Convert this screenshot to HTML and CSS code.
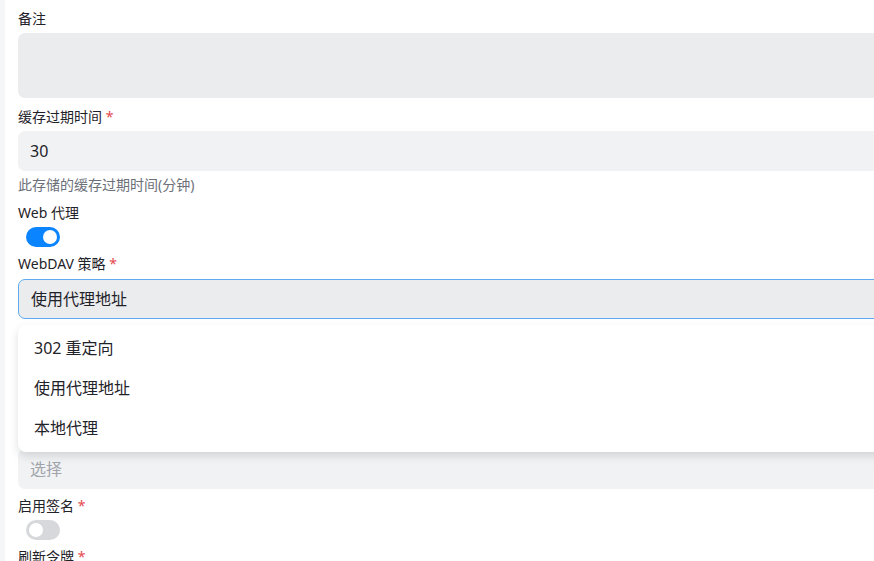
FILE: index.html
```html
<!DOCTYPE html>
<html lang="zh-CN">
<head>
<meta charset="utf-8">
<title>存储设置</title>
<link rel="stylesheet" href="styles.css">
</head>
<body>
<div class="page">
  <form class="card">
    <div class="field">
      <label class="label">备注</label>
      <div class="textarea"></div>
    </div>

    <div class="field">
      <label class="label">缓存过期时间 <span class="req">*</span></label>
      <div class="input">30</div>
      <div class="hint">此存储的缓存过期时间(分钟)</div>
    </div>

    <div class="field tight">
      <label class="label">Web 代理</label>
      <div class="switch on"><span class="knob"></span></div>
    </div>

    <div class="field">
      <label class="label label-select">WebDAV 策略 <span class="req">*</span></label>
      <div class="select-wrap">
        <div class="input select">使用代理地址</div>
        <ul class="menu">
          <li class="item">302 重定向</li>
          <li class="item">使用代理地址</li>
          <li class="item">本地代理</li>
        </ul>
      </div>
    </div>

    <div class="field">
      <label class="label">下载代理 URL</label>
      <div class="input"></div>
      <div class="hint hint-wide">留空则使用本地</div>
    </div>

    <div class="field tight">
      <label class="label">排序方式</label>
      <div class="input placeholder">选择</div>
    </div>

    <div class="field tight">
      <label class="label">启用签名 <span class="req">*</span></label>
      <div class="switch"><span class="knob"></span></div>
    </div>

    <div class="field">
      <label class="label">刷新令牌 <span class="req">*</span></label>
      <div class="input"></div>
    </div>
  </form>
</div>
</body>
</html>
```

FILE: styles.css
```css
html, body {
  margin: 0;
  padding: 0;
  overflow: hidden;
  background: #f5f6f7;
}

body {
  font-family: "Noto Sans", "Noto Sans CJK SC", sans-serif;
  color: #1f2329;
  font-size: 14px;
}

.page {
  padding-left: 5px;
}

.card {
  background: #ffffff;
  width: 1000px;
  padding: 9px 0 0 13px;
  display: flex;
  flex-direction: column;
  gap: 9px;
}

.field {
  display: flex;
  flex-direction: column;
  align-items: flex-start;
}

.field.tight {
  margin-bottom: -2px;
}

.label {
  font-size: 14px;
  line-height: 20px;
  height: 20px;
  margin-bottom: 4px;
  color: #1f2329;
}

.label-select {
  margin-bottom: 5px;
}

.req {
  color: #e5484d;
}

.textarea {
  width: 100%;
  height: 65px;
  background: #ebecee;
  border-radius: 7px;
}

.input {
  box-sizing: border-box;
  width: 100%;
  height: 40px;
  background: #f1f2f4;
  border-radius: 7px;
  padding: 0 12px;
  font-size: 16px;
  line-height: 40px;
  color: #1f2329;
}

.placeholder {
  color: #a0a4ab;
}

.hint {
  font-size: 14px;
  line-height: 18px;
  color: #6b7079;
  margin-top: 5px;
}

.hint-wide {
  margin-top: 6px;
}

.select-wrap {
  position: relative;
  width: 100%;
}

.select {
  background: #ebecee;
  border: 1px solid #5eacef;
  line-height: 38px;
}

.menu {
  position: absolute;
  left: 0;
  top: 46px;
  width: 100%;
  margin: 0;
  padding: 3px 0 4px;
  list-style: none;
  background: #ffffff;
  border-radius: 8px;
  box-shadow: 0 4px 10px rgba(0, 0, 0, 0.13);
  z-index: 5;
}

.item {
  height: 40px;
  line-height: 40px;
  padding: 0 16px;
  font-size: 16px;
  color: #1f2329;
}

.switch {
  box-sizing: border-box;
  width: 34px;
  height: 20px;
  margin-left: 8px;
  border-radius: 10px;
  background: #d6d8dc;
  padding: 3px;
  display: flex;
  justify-content: flex-start;
}

.switch.on {
  background: #0a84ff;
  justify-content: flex-end;
}

.knob {
  width: 14px;
  height: 14px;
  border-radius: 50%;
  background: #ffffff;
}
```
